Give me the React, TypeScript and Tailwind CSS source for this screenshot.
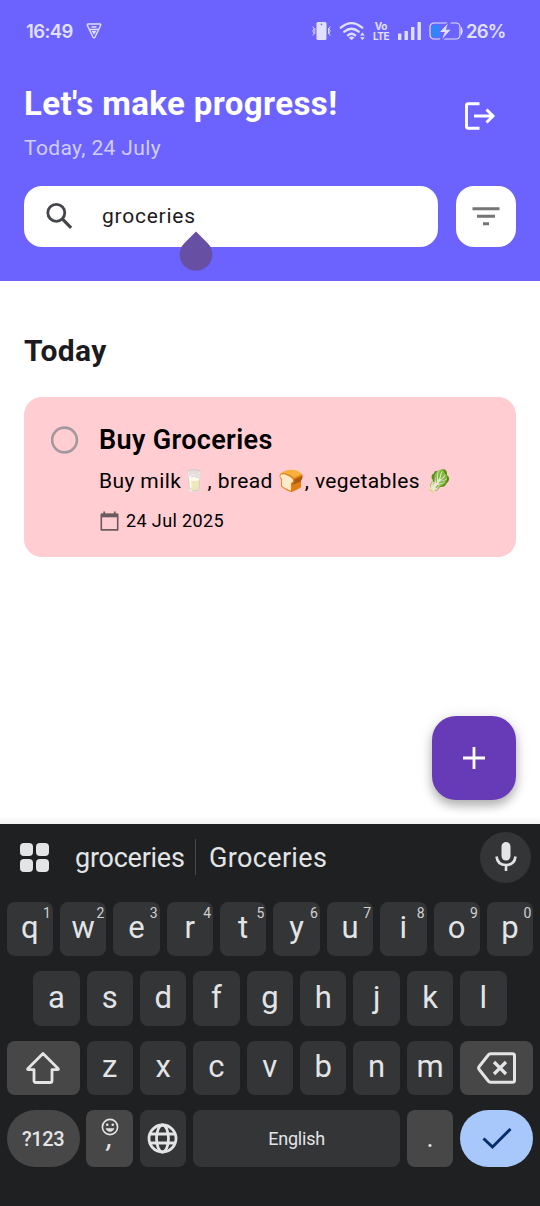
import React from "react";

const SuggestionDivider = () => <div className="h-9 w-px bg-[#48494b]" />;

function StatusBar() {
  return (
    <div className="flex h-[62px] items-center pl-[26px] text-[#e2e0ff]">
      <span className="w-[60px] font-[Inter] text-[18.500px] font-semibold leading-6 tracking-[-0.6px]">16:49</span>
      <svg className="h-[16px] w-[16px]" viewBox="0 0 16 16" fill="none" stroke="currentColor" strokeWidth="1.400" strokeLinejoin="round">
        <path d="M2.2 1h11.6q1.4 0 .8 1.4L9.2 13.8q-1.2 1.8-2.400 0L1.4 2.4Q.8 1 2.2 1Z" />
        <path d="M5.500 3.300h5v1.500h-5zM4 5.700h8v1.200H4zM5.400 7.700h5.200L8 11.800Z" fill="currentColor" stroke="none" />
      </svg>
      <div className="ml-[210px] flex items-center">
        <svg className="h-[20px] w-[20px]" viewBox="0 0 20 20" fill="none" stroke="currentColor" strokeWidth="1.2">
          <rect x="4.500" y="1" width="10" height="18" rx="1.5" fill="currentColor" stroke="none" />
          <circle cx="9.500" cy="3.400" r=".8" fill="#6c63ff" stroke="none" />
          <path d="M.8 5.500l1.200 2L.8 10l1.200 2.300L.8 14.500M2.800 7v6M18.200 5.500l-1.200 2 1.200 2.500-1.200 2.300 1.200 2.200M16.500 7v6" strokeWidth=".9" />
        </svg>
        <svg className="ml-[7px] h-[20px] w-[27px]" viewBox="0 0 27 20" fill="none" stroke="currentColor" strokeWidth="2.300" strokeLinecap="round">
          <path d="M1.800 6.700Q12.500-2.500 23.200 6.700M5.300 10.700q7.200-6 14.400 0M9 14.300q3.600-3 7.200 0" />
          <path d="M12.600 19.200l-2.800-2.600q2.800-2 5.600 0Z" fill="currentColor" stroke="none" />
          <path d="M21 14.400h4.800l-2.400-2.800ZM21 16.200h4.800l-2.400 2.800Z" fill="currentColor" stroke="none" />
        </svg>
        <div className="ml-[6px] flex w-[18px] flex-col items-center font-[Inter] text-[10px] font-bold leading-[10px]">
          <span className="tracking-[-0.2px]">Vo</span>
          <span className="tracking-[-0.5px]">LTE</span>
        </div>
        <svg className="ml-[8px] h-[20px] w-[24px]" viewBox="0 0 24 20" fill="currentColor">
          <rect x="0" y="12.500" width="3.400" height="6.500" rx=".5" />
          <rect x="6.500" y="10" width="3.400" height="9" rx=".5" />
          <rect x="13" y="6" width="3.400" height="13" rx=".5" />
          <rect x="19.500" y="1" width="3.400" height="18" rx=".5" />
        </svg>
        <svg className="ml-[7px] h-[22px] w-[35px]" viewBox="0 0 35 22" fill="none" stroke="currentColor" strokeWidth="1.200">
          <rect x="1" y="3" width="30" height="16" rx="4" />
          <path d="M32.400 7.500q1.600 3.500 0 7Z" fill="currentColor" strokeWidth="1" />
          <path d="M4 5h7v12H4q-1.500 0-1.500-1.500v-9Q2.500 5 4 5Z" fill="#2f86ff" stroke="none" />
          <path d="M20.500 0L9 13h4.500L10 22h3L23 9h-4l4-9Z" fill="#6c63ff" stroke="none" />
          <path d="M18.800 3.500L11 12h4.800l-2.600 7L21.500 9.800h-4.700Z" fill="currentColor" stroke="none" />
        </svg>
        <span className="ml-[2px] font-[Inter] text-[18.500px] font-semibold leading-6 tracking-[-0.8px]">26%</span>
      </div>
    </div>
  );
}

function Header() {
  return (
    <header className="h-[281px] bg-[#6c63ff]">
      <StatusBar />
      <div className="flex h-[124px] justify-between pl-[24px] pr-[44px]">
        <div className="pt-[22px]">
          <h1 className="text-[33px] font-bold leading-[40px] tracking-[0.4px] text-white">Let's make progress!</h1>
          <p className="mt-[10px] text-[21px] leading-[28px] tracking-[0.375px] text-[#d0cdff]">Today, 24 July</p>
        </div>
        <svg className="mt-[39px] h-[30px] w-[32px]" viewBox="0 0 32 30" fill="none" stroke="white" strokeWidth="2.900">
          <path d="M15.500 2.800H4.200Q2.500 2.800 2.500 4.500v21Q2.500 27.200 4.200 27.200h11.300M10 15h19M22.500 8.500L29 15l-6.500 6.500" />
        </svg>
      </div>
      <div className="flex gap-[18px] px-6">
        <div className="flex h-[60.500px] flex-1 items-center rounded-[18px] bg-white pl-[20px]">
          <svg className="h-[30px] w-[30px]" viewBox="0 0 30 30" fill="none" stroke="#44464b" strokeWidth="2.800">
            <circle cx="12.300" cy="11.800" r="8.500" />
            <path d="M18.300 17.800l8.800 9" strokeWidth="3.200" />
          </svg>
          <div className="relative ml-[28px]">
            <span className="text-[21px] leading-[30px] tracking-[0.75px] text-[#1d1b20]">groceries</span>
            <svg className="absolute left-[77px] top-[30px] h-[40px] w-[34px]" viewBox="0 0 34 40">
              <path d="M17 .5L28.500 12a16.300 16.300 0 1 1-23 0Z" fill="#6750a4" />
            </svg>
          </div>
        </div>
        <div className="flex h-[60.500px] w-[60px] items-center justify-center rounded-[18px] bg-white">
          <svg className="h-[20px] w-[28px]" viewBox="0 0 28 20" fill="#757575">
            <path d="M.5 1.200h27v3H.5zM5 8.700h18v3H5zM11 16.200h6v3h-6z" />
          </svg>
        </div>
      </div>
    </header>
  );
}

function TaskCard() {
  return (
    <article className="mt-[27px] flex h-[160px] rounded-[18px] bg-[#ffcdd2] pl-[27px]">
      <svg className="mt-[29px] h-[28px] w-[28px]" viewBox="0 0 28 28" fill="none" stroke="#a3999c" strokeWidth="2.600">
        <circle cx="13.500" cy="14" r="12.400" />
      </svg>
      <div className="ml-[20px] pt-[27px] text-black">
        <h3 className="text-[27px] font-semibold leading-[32px] tracking-[0.350px]">Buy Groceries</h3>
        <p className="mt-[11px] h-[28px] whitespace-nowrap text-[21px] leading-[28px] tracking-[0.390px]">Buy milk🥛, bread 🍞, vegetables 🥬</p>
        <div className="mt-[15px] flex items-center">
          <svg className="h-[21px] w-[21px]" viewBox="0 0 21 21" fill="none" stroke="#6b5b5e" strokeWidth="1.600">
            <path d="M2.300 3.200h16.400v15.700H2.300z" strokeLinejoin="round" />
            <path d="M2.300 4.500h16.400" strokeWidth="3.600" />
            <path d="M5.200 .5v3M15.800 .5v3" strokeWidth="1.800" />
          </svg>
          <span className="ml-[6px] text-[18px] leading-[22px] tracking-[0.375px]">24 Jul 2025</span>
        </div>
      </div>
    </article>
  );
}

function Key({ label, hint }: { label: string; hint?: string }) {
  return (
    <div className="relative flex h-full w-[46.400px] items-center justify-center rounded-[8px] bg-[#343537] pb-[2px] text-[31px]">
      <span className="leading-[40px]">{label}</span>
      {hint && <span className="absolute right-[2px] top-[2.500px] text-[14px] leading-[16px] text-[#d0d1d3]">{hint}</span>}
    </div>
  );
}

const topRow = ["q", "w", "e", "r", "t", "y", "u", "i", "o", "p"];

function Keyboard() {
  return (
    <section className="h-[382px] bg-[#1f2022] text-[#e3e4e6]">
      <div className="flex h-[66px] items-center pl-[20px] pr-[9px]">
        <div className="grid w-[29px] grid-cols-2 gap-[3px]">
          <i className="h-[13px] w-[13px] rounded-[4px] bg-[#e3e4e6]" />
          <i className="h-[13px] w-[13px] rounded-[4px] bg-[#e3e4e6]" />
          <i className="h-[13px] w-[13px] rounded-[4px] bg-[#e3e4e6]" />
          <i className="h-[13px] w-[13px] rounded-[4px] bg-[#e3e4e6]" />
        </div>
        <span className="ml-[26px] w-[120px] pt-[1px] text-[27px] leading-[36px] tracking-[-0.250px]">groceries</span>
        <SuggestionDivider />
        <span className="ml-[13px] pt-[1px] text-[27px] leading-[36px] tracking-[0.350px]">Groceries</span>
        <div className="ml-auto flex h-[51px] w-[51px] items-center justify-center rounded-full bg-[#343537]">
          <svg className="h-[30px] w-[22px]" viewBox="0 0 22 30" fill="none" stroke="currentColor" strokeWidth="2.600">
            <rect x="6.500" y="0" width="9" height="18.500" rx="4.500" fill="currentColor" stroke="none" />
            <path d="M1.500 14.500q1 8.500 9.500 8.500t9.500-8.500M11 23v6" />
          </svg>
        </div>
      </div>
      <div className="flex flex-col gap-[15.200px] pl-[6.500px] pr-[6.700px] pt-[12px]">
        <div className="flex h-[54.300px] justify-between">
          {topRow.map((k, i) => <Key key={k} label={k} hint={String((i + 1) % 10)} />)}
        </div>
        <div className="flex h-[54.300px] justify-between px-[26.700px]">
          {["a", "s", "d", "f", "g", "h", "j", "k", "l"].map((k) => <Key key={k} label={k} />)}
        </div>
        <div className="flex h-[54.300px] justify-between">
          <div className="flex w-[73px] items-center justify-center rounded-[8px] bg-[#464746]">
            <svg className="h-[34px] w-[36px]" viewBox="0 0 36 34" fill="none" stroke="currentColor" strokeWidth="2.800" strokeLinejoin="round">
              <path d="M18 2.500L33 17.500q1 1.200-.5 1.200H27v11q0 1.800-1.800 1.800H10.800Q9 31.500 9 29.700v-11H3.500Q2 18.700 3 17.500Z" />
            </svg>
          </div>
          {["z", "x", "c", "v", "b", "n", "m"].map((k) => <Key key={k} label={k} />)}
          <div className="flex w-[73px] items-center justify-center rounded-[8px] bg-[#464746]">
            <svg className="h-[34px] w-[40px]" viewBox="0 0 40 34" fill="none" stroke="currentColor" strokeWidth="3" strokeLinejoin="round">
              <path d="M13.500 2.800h22q2 0 2 2v24.400q0 2-2 2h-22q-1.300 0-2.200-1.200L2 18.200q-.8-1.200 0-2.400L11.300 4Q12.200 2.800 13.500 2.800Z" />
              <path d="M17 11l12 12M29 11l-12 12" strokeWidth="3.200" />
            </svg>
          </div>
        </div>
        <div className="flex h-[57px] justify-between">
          <div className="flex w-[73px] items-center justify-center rounded-full bg-[#464746] text-[20px] font-medium tracking-[-0.400px]">?123</div>
          <div className="flex w-[46.400px] flex-col items-center rounded-[8px] bg-[#464746] pt-[8px]">
            <svg className="h-[18px] w-[18px]" viewBox="0 0 18 18" fill="none" stroke="currentColor" strokeWidth="1.600">
              <circle cx="9" cy="9" r="7.600" />
              <circle cx="6.200" cy="6.800" r="1.300" fill="currentColor" stroke="none" />
              <circle cx="11.800" cy="6.800" r="1.300" fill="currentColor" stroke="none" />
              <path d="M4.600 10.300h8.800q-1.300 3.400-4.400 3.400t-4.400-3.400Z" fill="currentColor" stroke="none" />
            </svg>
            <span className="text-[25px] font-medium italic leading-[6px]">,</span>
          </div>
          <div className="flex w-[46.400px] items-center justify-center rounded-[8px] bg-[#343537]">
            <svg className="h-[31px] w-[31px]" viewBox="0 0 31 31" fill="none" stroke="currentColor" strokeWidth="2.800">
              <circle cx="15.500" cy="15.500" r="13.500" />
              <ellipse cx="15.500" cy="15.500" rx="6" ry="13.500" />
              <path d="M3 11h25M3 20h25" />
            </svg>
          </div>
          <div className="flex w-[207px] items-center justify-center rounded-[8px] bg-[#343537] text-[18px] tracking-[-0.200px]">English</div>
          <div className="flex w-[46.400px] items-center justify-center rounded-[8px] bg-[#464746] pb-px text-[27px]">.</div>
          <div className="flex w-[73px] items-center justify-center rounded-full bg-[#a8c7fa]">
            <svg className="h-[22px] w-[30px]" viewBox="0 0 30 22" fill="none" stroke="#062e6f" strokeWidth="3">
              <path d="M1.500 10.500l9 8.500L28.500 1" />
            </svg>
          </div>
        </div>
      </div>
    </section>
  );
}

export default function App() {
  return (
    <div className="flex h-[1206px] w-[540px] flex-col overflow-hidden bg-white font-[Roboto,sans-serif]">
      <Header />
      <main className="relative h-[543px] px-6 pt-[51px]">
        <h2 className="text-[30px] font-bold leading-[38px] tracking-[0.400px] text-[#1c1b1f]">Today</h2>
        <TaskCard />
        <button aria-label="Add task" className="absolute bottom-6 right-6 flex h-[84px] w-[84px] items-center justify-center rounded-[24px] bg-[#673ab7] shadow-[0_6px_10px_rgba(0,0,0,0.24),0_2px_16px_rgba(0,0,0,0.12)]">
          <svg className="h-[22px] w-[22px]" viewBox="0 0 22 22" stroke="white" strokeWidth="2.800">
            <path d="M11 0v22M0 11h22" />
          </svg>
        </button>
        <div className="absolute inset-x-0 bottom-0 h-[8px] bg-linear-to-b from-transparent to-black/5" />
      </main>
      <Keyboard />
    </div>
  );
}
